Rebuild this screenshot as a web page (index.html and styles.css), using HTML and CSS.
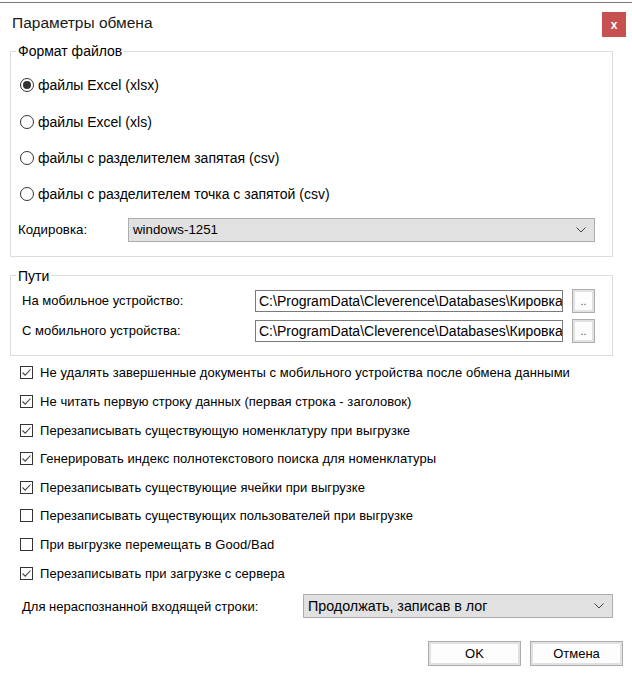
FILE: index.html
```html
<!DOCTYPE html>
<html lang="ru">
<head>
<meta charset="utf-8">
<title>Параметры обмена</title>
<link rel="stylesheet" href="styles.css">
</head>
<body>
<div class="window">
  <div class="titlebar">
    <div class="title">Параметры обмена</div>
    <div class="close">x</div>
  </div>
  <div class="content">
    <fieldset class="group group-format">
      <legend>Формат файлов</legend>
      <div class="radio-list">
        <div class="radio-row"><span class="radio checked"></span><span>файлы Excel (xlsx)</span></div>
        <div class="radio-row"><span class="radio"></span><span>файлы Excel (xls)</span></div>
        <div class="radio-row"><span class="radio"></span><span>файлы с разделителем запятая (csv)</span></div>
        <div class="radio-row"><span class="radio"></span><span>файлы с разделителем точка с запятой (csv)</span></div>
      </div>
      <div class="enc-row">
        <span class="enc-label">Кодировка:</span>
        <div class="select enc-select">
          <span>windows-1251</span>
          <svg class="chev" width="10" height="6" viewBox="0 0 10 6"><polyline points="0.5,0.5 5,5 9.5,0.5" fill="none" stroke="#444" stroke-width="1"/></svg>
        </div>
      </div>
    </fieldset>

    <fieldset class="group group-paths">
      <legend>Пути</legend>
      <div class="path-row">
        <span class="path-label">На мобильное устройство:</span>
        <div class="path-input">C:\ProgramData\Cleverence\Databases\Кировка</div>
        <div class="browse">..</div>
      </div>
      <div class="path-row second">
        <span class="path-label">С мобильного устройства:</span>
        <div class="path-input">C:\ProgramData\Cleverence\Databases\Кировка</div>
        <div class="browse">..</div>
      </div>
    </fieldset>

    <div class="check-list">
      <div class="check-row"><span class="check on"><svg width="11" height="11" viewBox="0 0 11 11"><polyline points="1.5,5.5 4.2,8.2 9.5,2.5" fill="none" stroke="#444" stroke-width="1.1"/></svg></span><span>Не удалять завершенные документы с мобильного устройства после обмена данными</span></div>
      <div class="check-row"><span class="check on"><svg width="11" height="11" viewBox="0 0 11 11"><polyline points="1.5,5.5 4.2,8.2 9.5,2.5" fill="none" stroke="#444" stroke-width="1.1"/></svg></span><span>Не читать первую строку данных (первая строка - заголовок)</span></div>
      <div class="check-row"><span class="check on"><svg width="11" height="11" viewBox="0 0 11 11"><polyline points="1.5,5.5 4.2,8.2 9.5,2.5" fill="none" stroke="#444" stroke-width="1.1"/></svg></span><span>Перезаписывать существующую номенклатуру при выгрузке</span></div>
      <div class="check-row"><span class="check on"><svg width="11" height="11" viewBox="0 0 11 11"><polyline points="1.5,5.5 4.2,8.2 9.5,2.5" fill="none" stroke="#444" stroke-width="1.1"/></svg></span><span>Генерировать индекс полнотекстового поиска для номенклатуры</span></div>
      <div class="check-row"><span class="check on"><svg width="11" height="11" viewBox="0 0 11 11"><polyline points="1.5,5.5 4.2,8.2 9.5,2.5" fill="none" stroke="#444" stroke-width="1.1"/></svg></span><span>Перезаписывать существующие ячейки при выгрузке</span></div>
      <div class="check-row"><span class="check"></span><span>Перезаписывать существующих пользователей при выгрузке</span></div>
      <div class="check-row"><span class="check"></span><span>При выгрузке перемещать в Good/Bad</span></div>
      <div class="check-row"><span class="check on"><svg width="11" height="11" viewBox="0 0 11 11"><polyline points="1.5,5.5 4.2,8.2 9.5,2.5" fill="none" stroke="#444" stroke-width="1.1"/></svg></span><span>Перезаписывать при загрузке с сервера</span></div>
    </div>

    <div class="unrec-row">
      <span class="unrec-label">Для нераспознанной входящей строки:</span>
      <div class="select unrec-select">
        <span>Продолжать, записав в лог</span>
        <svg class="chev" width="10" height="6" viewBox="0 0 10 6"><polyline points="0.5,0.5 5,5 9.5,0.5" fill="none" stroke="#444" stroke-width="1"/></svg>
      </div>
    </div>

    <div class="buttons">
      <div class="btn">OK</div>
      <div class="btn">Отмена</div>
    </div>
  </div>
</div>
</body>
</html>
```

FILE: styles.css
```css
html, body {
  margin: 0;
  padding: 0;
  background: #ffffff;
}
body {
  font-family: "Liberation Sans", Arial, sans-serif;
  font-size: 13px;
  color: #000;
  width: 632px;
  height: 677px;
  overflow: hidden;
}
.window {
  margin-top: 2px;
  border-top: 1px solid #7a7a7a;
}
.titlebar {
  display: flex;
  justify-content: space-between;
  align-items: center;
  padding: 9px 6px 0 12px;
}
.title {
  font-size: 15.5px;
  color: #1a1a1a;
  line-height: 20px;
  margin-top: -3px;
}
.close {
  width: 24px;
  height: 25px;
  background: #c75050;
  color: #fff;
  font-weight: bold;
  font-size: 12px;
  display: flex;
  align-items: center;
  justify-content: center;
  line-height: 1;
}
.content {
  padding: 0 19px 0 10px;
}
.group {
  margin: 0;
  border: 1px solid #dcdcdc;
  padding: 0;
  min-width: 0;
}
.group legend {
  margin-left: 5px;
  padding: 0 2px;
  line-height: 16px;
  font-size: 14px;
}
.group-format {
  margin-top: 6px;
  padding-bottom: 14px;
}
.radio-list {
  padding-top: 8px;
  font-size: 14px;
}
.radio-row {
  height: 36.4px;
  display: flex;
  align-items: center;
  padding-left: 9px;
  gap: 4px;
}
.radio {
  width: 14px;
  height: 14px;
  box-sizing: border-box;
  border: 1px solid #333;
  border-radius: 50%;
  display: flex;
  align-items: center;
  justify-content: center;
  flex: none;
}
.radio.checked::after {
  content: "";
  width: 8px;
  height: 8px;
  border-radius: 50%;
  background: #333;
}
.enc-row {
  margin-top: 5px;
  display: flex;
  align-items: center;
  padding-left: 7px;
  font-size: 13.3px;
}
.enc-label {
  width: 110px;
}
.select {
  box-sizing: border-box;
  height: 24px;
  background: #e1e1e1;
  border: 1px solid #adadad;
  display: flex;
  align-items: center;
  justify-content: space-between;
  padding: 0 8px 0 4px;
}
.enc-select {
  width: 467px;
}
.chev {
  display: block;
}
.group-paths {
  margin-top: 11px;
  padding-bottom: 12px;
}
.path-row {
  margin-top: 5px;
  display: flex;
  align-items: center;
  padding-left: 11px;
  height: 24px;
}
.path-row.second {
  margin-top: 6px;
}
.path-label {
  width: 233px;
}
.path-input {
  box-sizing: border-box;
  width: 308px;
  height: 22px;
  border: 1px solid #7a7a7a;
  padding: 0 3px;
  line-height: 20px;
  font-size: 14px;
  white-space: nowrap;
  overflow: hidden;
}
.browse {
  box-sizing: border-box;
  margin-left: 9px;
  width: 23px;
  height: 24px;
  border: 1px solid #adadad;
  box-shadow: inset 0 0 0 2px #e1e1e1;
  background: #fdfdfd;
  font-size: 11px;
  display: flex;
  align-items: flex-end;
  justify-content: center;
  padding-bottom: 5px;
  line-height: 1;
  color: #5a4a3a;
}
.check-list {
  margin-top: 3px;
  letter-spacing: 0.05px;
}
.check-row {
  height: 28.6px;
  display: flex;
  align-items: center;
  padding-left: 10px;
  gap: 7px;
}
.check {
  box-sizing: border-box;
  width: 13px;
  height: 13px;
  border: 1px solid #333;
  display: flex;
  align-items: center;
  justify-content: center;
  flex: none;
}
.check svg {
  display: block;
}
.unrec-row {
  margin-top: 7px;
  display: flex;
  align-items: center;
  padding-left: 12px;
}
.unrec-label {
  width: 281px;
}
.unrec-select {
  width: 310px;
  font-size: 14.3px;
}
.buttons {
  margin-top: 23px;
  margin-right: -10px;
  display: flex;
  justify-content: flex-end;
  gap: 9px;
}
.btn {
  box-sizing: border-box;
  width: 93px;
  height: 25px;
  border: 1px solid #adadad;
  box-shadow: inset 0 0 0 2px #e1e1e1;
  background: #fdfdfd;
  display: flex;
  align-items: center;
  justify-content: center;
}
```
